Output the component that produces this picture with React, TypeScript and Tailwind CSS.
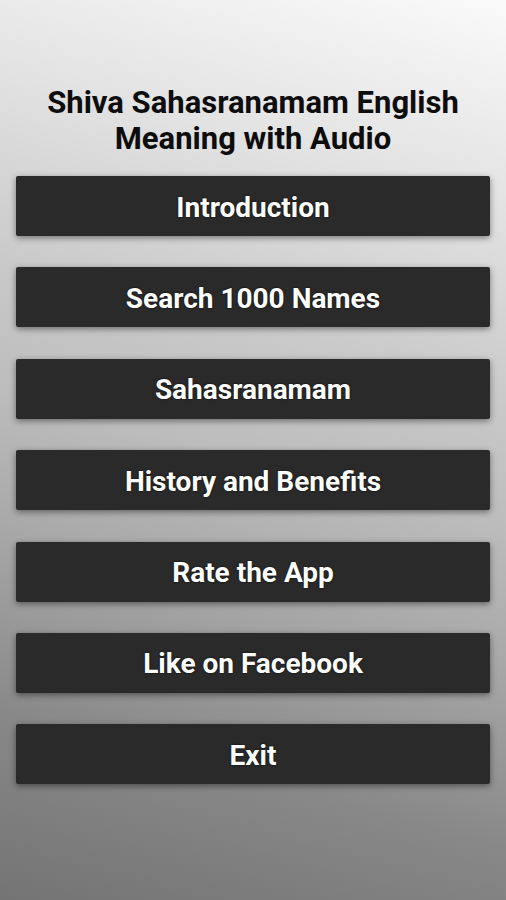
const items = [
  "Introduction",
  "Search 1000 Names",
  "Sahasranamam",
  "History and Benefits",
  "Rate the App",
  "Like on Facebook",
  "Exit",
];

export default function App() {
  return (
    <div className="min-h-[900px] w-full bg-[linear-gradient(195deg,#fafafa_0%,#e2e2e2_20%,#cacaca_38%,#bcbcbc_51%,#a8a8a8_64%,#888888_82%,#747474_100%)] font-['Roboto',sans-serif]">
      <div className="flex flex-col items-center px-4 pt-[85px]">
        {/* Title */}
        <h1 className="text-center text-[31px] font-bold leading-[36px] text-[#0d0d0d]">
          Shiva Sahasranamam English
          <br />
          Meaning with Audio
        </h1>

        {/* Menu buttons */}
        <div className="mt-[19px] flex w-full flex-col gap-[31.4px]">
          {items.map((label) => (
            <button
              key={label}
              className="flex h-[60px] w-full items-center justify-center rounded-[2px] bg-[#2a2a2a] pt-[3px] text-[28px] font-bold text-white shadow-[0_2px_6px_rgba(0,0,0,0.45)] [text-shadow:0_0_2px_#000]"
            >
              {label}
            </button>
          ))}
        </div>
      </div>
    </div>
  );
}
